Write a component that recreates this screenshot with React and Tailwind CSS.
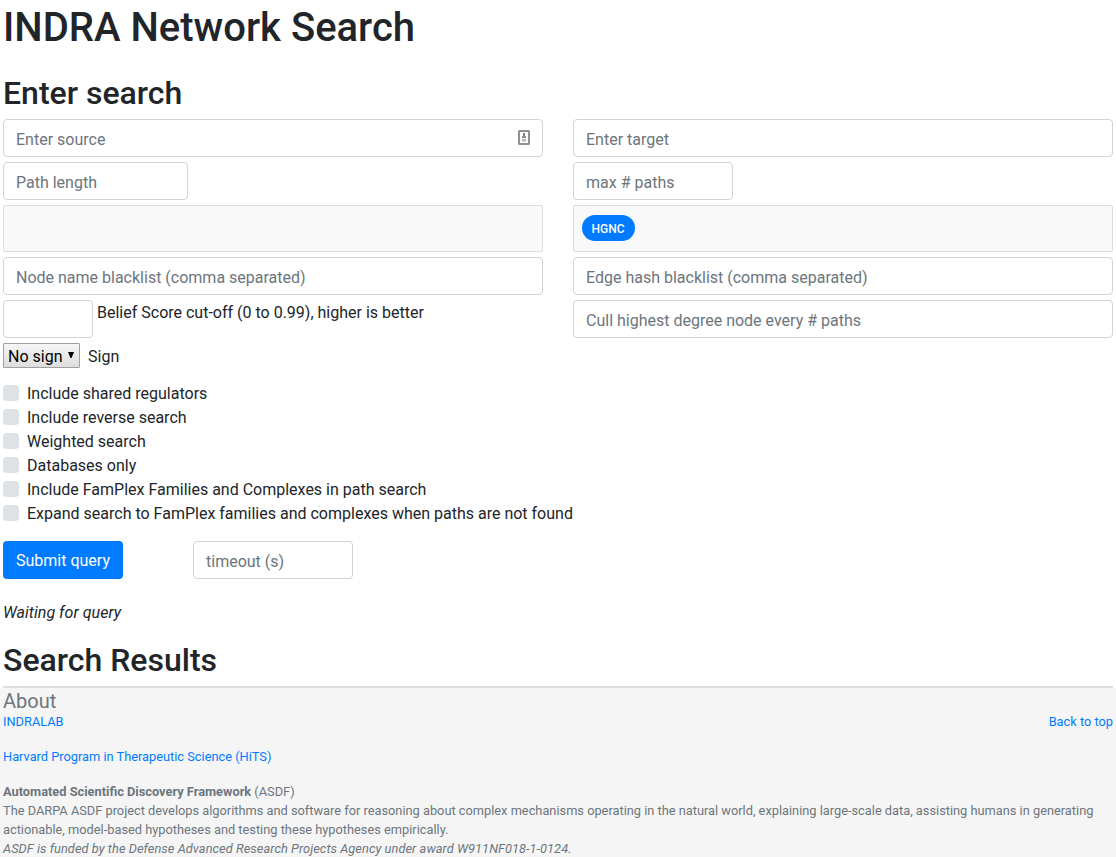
const inputBase =
  "block h-[38px] rounded border border-[#ced4da] bg-white px-3 pt-[7px] pb-[5px] text-base leading-6 text-[#495057] placeholder:text-[#6c757d] placeholder:opacity-100 outline-none";

function Field({ placeholder, width = "w-full" }) {
  return <input type="text" placeholder={placeholder} className={`${inputBase} ${width}`} />;
}

function AutofillIcon() {
  return (
    <svg viewBox="0 0 12 15" className="absolute top-[11px] right-[13px] h-[15px] w-3" aria-hidden="true">
      <rect x="1" y="1" width="10" height="13" rx="0.5" fill="#fff" stroke="#909090" strokeWidth="2" />
      <rect x="5" y="3" width="2" height="3" fill="#808080" />
      <path d="M4 6h4v2H4z" fill="#909090" />
      <path d="M4 9h4v2.5H4z" fill="#b8b8b8" />
    </svg>
  );
}

const options = [
  "Include shared regulators",
  "Include reverse search",
  "Weighted search",
  "Databases only",
  "Include FamPlex Families and Complexes in path search",
  "Expand search to FamPlex families and complexes when paths are not found",
];

export default function App() {
  return (
    <div className="flex h-[857px] flex-col overflow-hidden bg-white font-['Roboto',sans-serif] text-base leading-6 text-[#212529]">
      <main className="px-[3px] pt-1">
        <h1 className="text-[40px] leading-[48px] font-medium">INDRA Network Search</h1>
        <h2 className="mt-[22px] text-[32px] leading-[38px] font-medium">Enter search</h2>

        <div className="mt-[7px] grid grid-cols-2 gap-x-[30px]">
          <div className="flex flex-col gap-[5px]">
            <div className="relative">
              <Field placeholder="Enter source" />
              <AutofillIcon />
            </div>
            <Field placeholder="Path length" width="w-[185px]" />
            <div className="h-[47px] rounded-[2px] border border-[#dddddd] bg-[#f9f9f9]" />
            <Field placeholder="Node name blacklist (comma separated)" />
            <div className="flex gap-1">
              <Field placeholder="" width="w-[90px]" />
              <span className="pt-px">Belief Score cut-off (0 to 0.99), higher is better</span>
            </div>
            <div className="flex h-[25px] items-center gap-2">
              <button
                type="button"
                className="flex h-[25px] w-[77px] items-center rounded-[1px] border border-[#a0a0a0] bg-linear-to-b from-[#f6f6f6] to-[#dddddd] pl-1 text-black"
              >
                <span className="relative top-px">No sign</span>
                <svg viewBox="0 0 6 6" className="mb-px ml-[6px] h-[6px] w-[6px]" aria-hidden="true">
                  <path d="M0 0h6L3.5 6h-1z" fill="#000" />
                </svg>
              </button>
              <span className="relative top-px">Sign</span>
            </div>
          </div>
          <div className="flex flex-col gap-[5px]">
            <Field placeholder="Enter target" />
            <Field placeholder="max # paths" width="w-40" />
            <div className="h-[47px] rounded-[2px] border border-[#dddddd] bg-[#f9f9f9] px-2 pt-[9px]">
              <span className="flex h-[26px] w-[53px] items-center justify-center rounded-full bg-[#007bff] pt-px pr-px text-xs font-medium text-white">
                HGNC
              </span>
            </div>
            <Field placeholder="Edge hash blacklist (comma separated)" />
            <Field placeholder="Cull highest degree node every # paths" />
          </div>
        </div>

        <ul className="mt-[13px]">
          {options.map((label) => (
            <li key={label} className="flex h-6 items-center gap-2">
              <span className="h-4 w-4 rounded bg-[#dee2e6]" />
              <span className="pt-[2px]">{label}</span>
            </li>
          ))}
        </ul>

        <div className="mt-4 flex gap-[70px]">
          <button type="button" className="h-[38px] w-[120px] rounded bg-[#007bff] pt-[2px] text-white">
            Submit query
          </button>
          <Field placeholder="timeout (s)" width="w-40" />
        </div>

        <p className="mt-[22px] tracking-[0.04px] italic">Waiting for query</p>
        <h2 className="mt-4 text-[32px] leading-[38px] font-medium">Search Results</h2>
        <hr className="mt-[7px] h-[2px] border-0 bg-[#dedede]" />
      </main>

      <footer className="flex-1 bg-[#f5f5f5] px-[3px] pt-px text-[12.8px] leading-[19px] text-[#6c757d]">
        <h5 className="text-xl leading-6">About</h5>
        <div className="-mt-px flex justify-between text-[#007bff]">
          <a href="#lab">INDRALAB</a>
          <a href="#top">Back to top</a>
        </div>
        <p className="mt-4 text-[#007bff]">
          <a href="#hits">Harvard Program in Therapeutic Science (HiTS)</a>
        </p>
        <p className="mt-4">
          <b className="font-bold">Automated Scientific Discovery Framework</b> (ASDF)
          <br />
          The DARPA ASDF project develops algorithms and software for reasoning about complex mechanisms operating in the
          natural world, explaining large-scale data, assisting humans in generating actionable, model-based hypotheses and
          testing these hypotheses empirically.
          <br />
          <i className="tracking-[0.057px]">ASDF is funded by the Defense Advanced Research Projects Agency under award W911NF018-1-0124.</i>
        </p>
      </footer>
    </div>
  );
}
